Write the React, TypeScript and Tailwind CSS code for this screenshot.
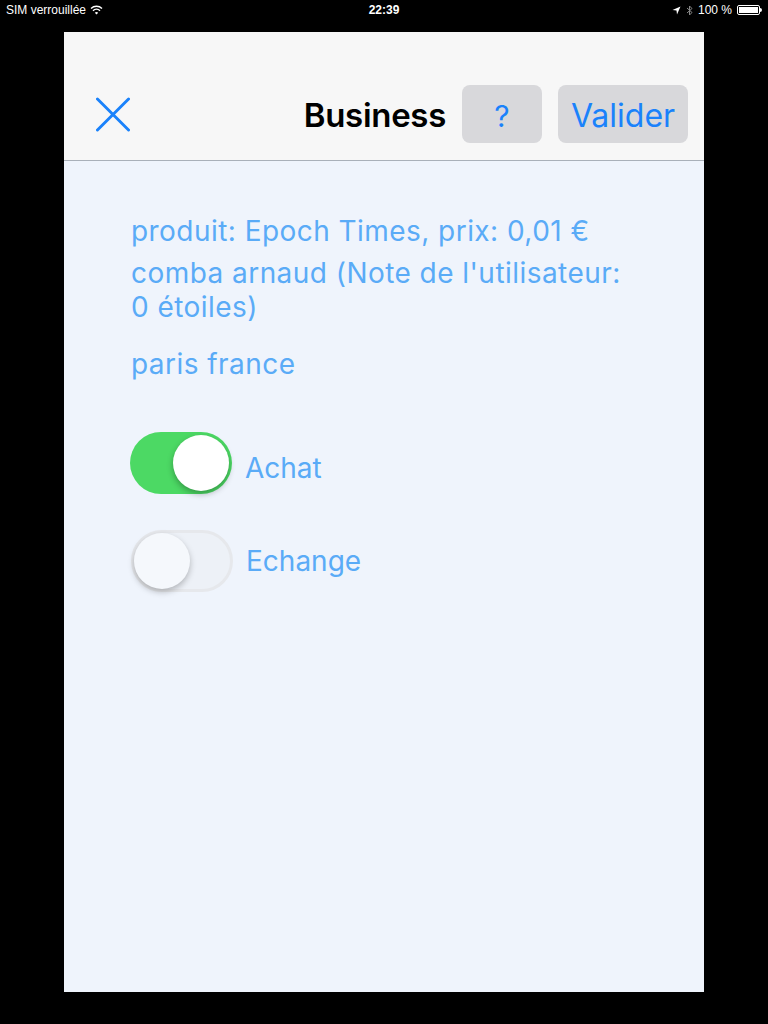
import React from "react";

const Toggle: React.FC<{ on: boolean }> = ({ on }) => (
    <div
        className={
            on
                ? "relative w-[102px] h-[62px] rounded-full bg-[#4cd964]"
                : "relative w-[102px] h-[62px] rounded-full bg-[#edf1f7] border-[3px] border-[#e6e8ec]"
        }
    >
        <div
            className={
                on
                    ? "absolute top-[3px] right-[3px] w-[56px] h-[56px] rounded-full bg-white shadow-[0_3px_6px_rgba(0,0,0,0.3)]"
                    : "absolute top-[0px] left-[0px] w-[56px] h-[56px] rounded-full bg-[#f5f8fc] shadow-[0_3px_6px_rgba(0,0,0,0.25)]"
            }
        />
    </div>
);

export default function App() {
    return (
        <div className="w-[768px] h-[1024px] bg-black flex flex-col font-['Inter',sans-serif]">
            {/* status bar */}
            <div className="h-5 px-[6px] flex items-center justify-between text-white text-[12px] font-['Liberation_Sans',sans-serif]">
                <div className="flex items-center gap-1 w-[200px]">
                    <span>SIM verrouillée</span>
                    <svg width="13" height="10" viewBox="0 0 13 10">
                        <path d="M1 3.5 A8 8 0 0 1 12 3.5" stroke="white" strokeWidth="1.4" fill="none" />
                        <path d="M3 5.7 A5 5 0 0 1 10 5.7" stroke="white" strokeWidth="1.4" fill="none" />
                        <path d="M6.5 9.5 L4.8 7.7 A2.5 2.5 0 0 1 8.2 7.7 Z" fill="white" />
                    </svg>
                </div>
                <span className="font-semibold">22:39</span>
                <div className="flex items-center justify-end gap-[5px] w-[200px]">
                    <svg width="9" height="9" viewBox="0 0 9 9">
                        <path d="M8.5 0.5 L0.5 4 L4.5 4.5 L5 8.5 Z" fill="white" />
                    </svg>
                    <svg width="7" height="11" viewBox="0 0 7 11">
                        <path d="M1 3 L6 7.5 L3.5 10 L3.5 1 L6 3.5 L1 8" stroke="#888" strokeWidth="1" fill="none" />
                    </svg>
                    <span>100 %</span>
                    <div className="flex items-center">
                        <div className="w-[23px] h-[10px] border border-white rounded-[2px] p-[1px]">
                            <div className="w-full h-full bg-white" />
                        </div>
                        <div className="w-[2px] h-[4px] bg-white rounded-r-sm" />
                    </div>
                </div>
            </div>

            {/* sheet */}
            <div className="mt-3 mx-16 h-[960px] bg-[#eff4fc] flex flex-col">
                <div className="h-[129px] bg-[#f7f7f7] border-b border-[#a9b0b9] pt-[53px] flex items-start">
                    <div className="w-[66px] h-[58px] pl-[32px] flex items-center">
                        <svg width="35" height="35" viewBox="0 0 35 35">
                            <path d="M1.5 1.5 L33.5 33.5 M33.5 1.5 L1.5 33.5" stroke="#1a82fb" strokeWidth="3" strokeLinecap="round" />
                        </svg>
                    </div>
                    <div className="flex-1 h-[58px] pt-[4px] flex items-center justify-end pr-[16px] text-[33px] font-semibold text-black tracking-[-0.3px]">
                        Business
                    </div>
                    <div className="w-[80px] h-[58px] pt-[4px] rounded-lg bg-[#d8d8db] flex items-center justify-center text-[30px] text-[#1a82fb]">
                        ?
                    </div>
                    <div className="ml-[16px] mr-[16px] w-[130px] h-[58px] pt-[4px] rounded-lg bg-[#d8d8db] flex items-center justify-center text-[32px] text-[#1a82fb]">
                        Valider
                    </div>
                </div>

                <div className="pl-[67px] pt-[53px] text-[#5aabf7] text-[28px] leading-[34px] tracking-[0.45px]">
                    <p>produit: Epoch Times, prix: 0,01 €</p>
                    <p className="mt-[8px] w-[500px]">comba arnaud (Note de l'utilisateur: 0 étoiles)</p>
                    <p className="mt-[23px]">paris france</p>

                    <div className="mt-[51px] flex items-center gap-[13px] -ml-[1px] tracking-normal">
                        <Toggle on={true} />
                        <span className="mt-[10px]">Achat</span>
                    </div>
                    <div className="mt-[36px] flex items-center gap-[13px] tracking-normal">
                        <Toggle on={false} />
                        <span>Echange</span>
                    </div>
                </div>
            </div>
        </div>
    );
}
